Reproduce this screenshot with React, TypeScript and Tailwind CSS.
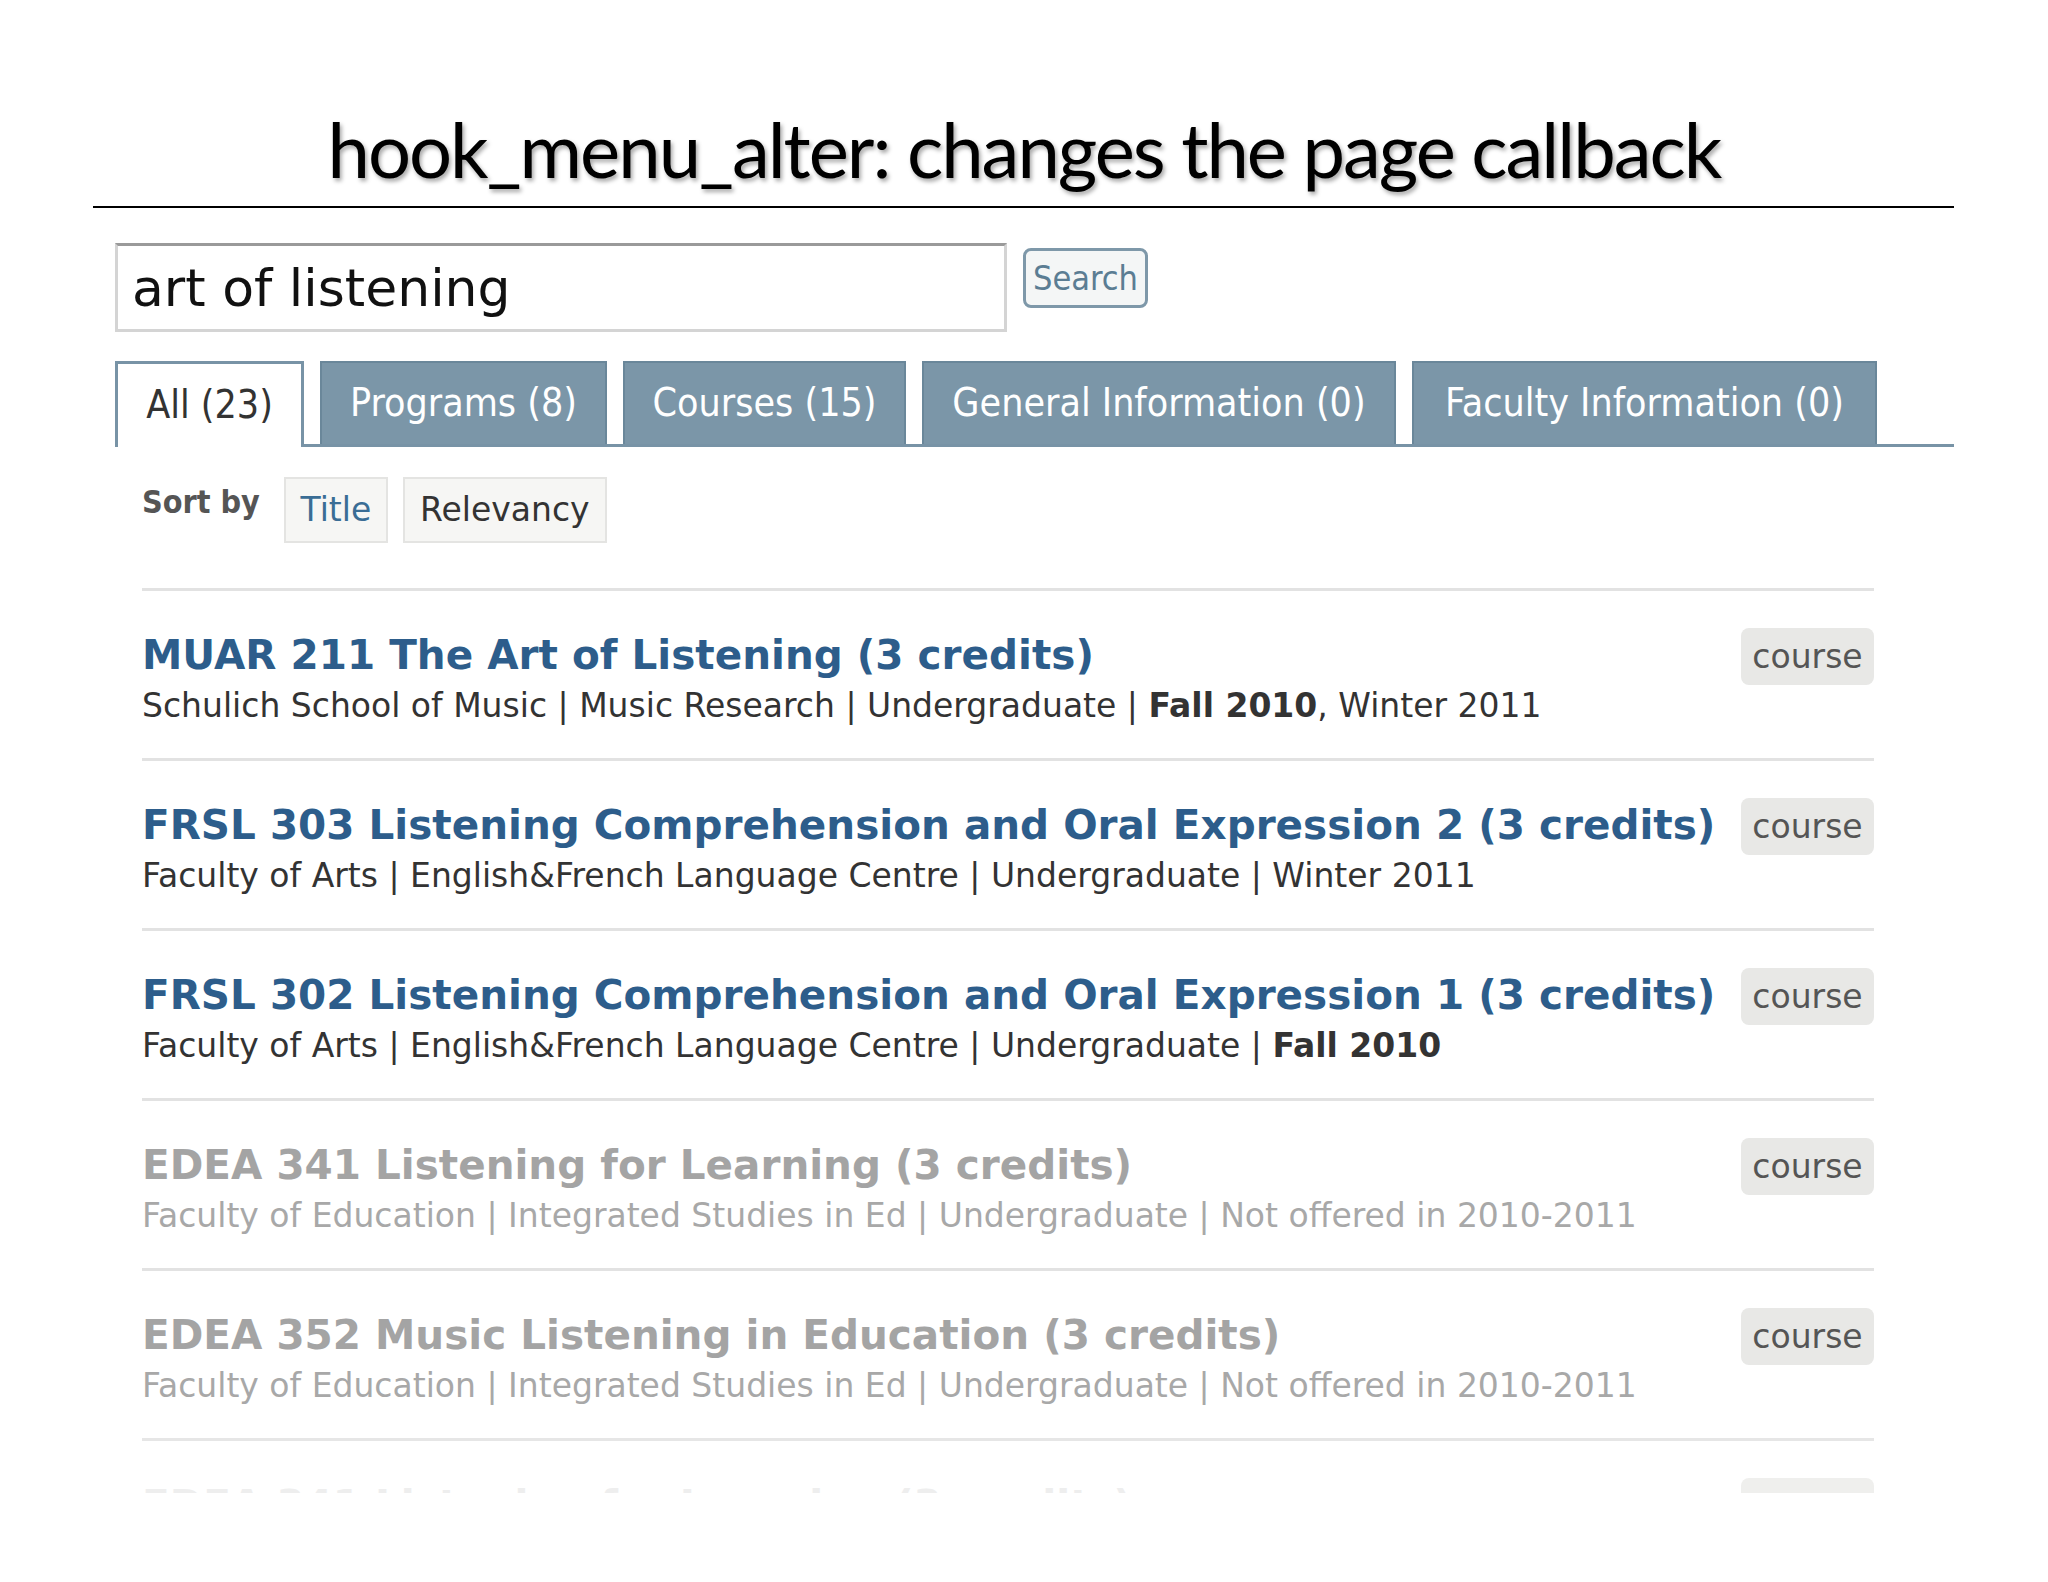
import React from "react";

const tabs = [
  { label: "All (23)", active: true, w: "w-[189px]" },
  { label: "Programs (8)", active: false, w: "w-[287px]" },
  { label: "Courses (15)", active: false, w: "w-[283px]" },
  { label: "General Information (0)", active: false, w: "w-[474px]" },
  { label: "Faculty Information (0)", active: false, w: "w-[465px]" },
];

type Row = {
  title: string;
  parts: React.ReactNode;
  faded?: boolean;
};

const rows: Row[] = [
  {
    title: "MUAR 211 The Art of Listening (3 credits)",
    parts: (
      <>
        Schulich School of Music | Music Research | Undergraduate | <b>Fall 2010</b>, Winter 2011
      </>
    ),
  },
  {
    title: "FRSL 303 Listening Comprehension and Oral Expression 2 (3 credits)",
    parts: <>Faculty of Arts | English&amp;French Language Centre | Undergraduate | Winter 2011</>,
  },
  {
    title: "FRSL 302 Listening Comprehension and Oral Expression 1 (3 credits)",
    parts: (
      <>
        Faculty of Arts | English&amp;French Language Centre | Undergraduate | <b>Fall 2010</b>
      </>
    ),
  },
  {
    title: "EDEA 341 Listening for Learning (3 credits)",
    parts: <>Faculty of Education | Integrated Studies in Ed | Undergraduate | Not offered in 2010-2011</>,
    faded: true,
  },
  {
    title: "EDEA 352 Music Listening in Education (3 credits)",
    parts: <>Faculty of Education | Integrated Studies in Ed | Undergraduate | Not offered in 2010-2011</>,
    faded: true,
  },
];

const COND = "font-['DejaVu_Sans_Condensed','DejaVu_Sans',sans-serif]";
const SANS = "font-['DejaVu_Sans','Verdana',sans-serif]";

export default function App() {
  return (
    <div className="w-[2048px] h-[1582px] bg-white overflow-hidden">
      {/* Slide title */}
      <div className="pt-[104px] h-[206px] flex justify-center">
        <h1 className="font-['Lato','Open_Sans',sans-serif] text-[76px] leading-[90px] tracking-[-2px] text-black [text-shadow:2px_3px_4px_rgba(0,0,0,0.35)]">
          hook_menu_alter: changes the page callback
        </h1>
      </div>
      <div className="ml-[93px] w-[1861px] h-[2px] bg-black" />

      <div className="ml-[115px] mt-[35px]">
        {/* Search row */}
        <div className="flex items-start gap-[16px]">
          <div className="w-[892px] h-[89px] bg-white border-[3px] border-[#d4d4d4] border-t-[#9a9a9a] flex items-center pl-[14px]">
            <span className={`${SANS} text-[52px] text-[#111] leading-none`}>art of listening</span>
          </div>
          <div
            className={`${COND} mt-[5px] w-[125px] h-[60px] rounded-[8px] border-[3px] border-[#7e98a9] bg-[#f4f6f6] flex items-center justify-center text-[34px] text-[#5b7d93]`}
          >
            Search
          </div>
        </div>

        {/* Tabs */}
        <div className={`${COND} mt-[29px] w-[1839px] h-[86px] flex items-end gap-[16px] border-b-[3px] border-[#7893a6]`}>
          {tabs.map((t) =>
            t.active ? (
              <div
                key={t.label}
                className={`${t.w} h-[86px] -mb-[3px] bg-white border-[3px] border-b-0 border-[#7893a6] flex items-center justify-center text-[39px] text-[#333]`}
              >
                {t.label}
              </div>
            ) : (
              <div
                key={t.label}
                className={`${t.w} h-[83px] bg-[#7b96a8] border-[2px] border-b-0 border-[#6a879a] flex items-center justify-center text-[39px] text-white`}
              >
                {t.label}
              </div>
            )
          )}
        </div>

        {/* Sort by */}
        <div className="ml-[27px] mt-[30px] flex items-start">
          <span className={`${COND} mt-[1px] text-[32px] font-bold text-[#555]`}>Sort by</span>
          <div
            className={`${SANS} ml-[24px] w-[104px] h-[66px] bg-[#f6f6f4] border-[2px] border-[#e4e4e2] flex items-center justify-center text-[33px] text-[#3a6d95]`}
          >
            Title
          </div>
          <div
            className={`${SANS} ml-[15px] w-[204px] h-[66px] bg-[#f6f6f4] border-[2px] border-[#e4e4e2] flex items-center justify-center text-[33px] text-[#333]`}
          >
            Relevancy
          </div>
        </div>

        {/* Results */}
        <div className={`${SANS} ml-[27px] mt-[45px] w-[1732px] h-[905px] overflow-hidden`}>
          {rows.map((r) => (
            <div key={r.title} className="border-t-[3px] border-[#e2e2e2] h-[170px] flex items-start justify-between pt-[40px]">
              <div>
                <div
                  className={`text-[40.5px] leading-[48px] font-bold whitespace-nowrap ${r.faded ? "text-[#a4a4a4]" : "text-[#2d5d8b]"}`}
                >
                  {r.title}
                </div>
                <div className={`mt-[6px] text-[33px] leading-[42px] whitespace-nowrap ${r.faded ? "text-[#a8a8a8]" : "text-[#333]"}`}>
                  {r.parts}
                </div>
              </div>
              <div className="-mt-[3px] w-[133px] h-[57px] rounded-[8px] bg-[#e8e8e6] flex items-center justify-center text-[33px] text-[#555]">
                course
              </div>
            </div>
          ))}
          <div className="border-t-[3px] border-[#e6e6e6] h-[60px] flex items-start justify-between pt-[40px]">
            <div className="text-[40.5px] leading-[48px] font-bold text-[#eeeeee] whitespace-nowrap">
              EDEA 341 Listening for Learning (3 credits)
            </div>
            <div className="-mt-[3px] w-[133px] h-[57px] rounded-[8px] bg-[#efefed]" />
          </div>
        </div>
      </div>
    </div>
  );
}
